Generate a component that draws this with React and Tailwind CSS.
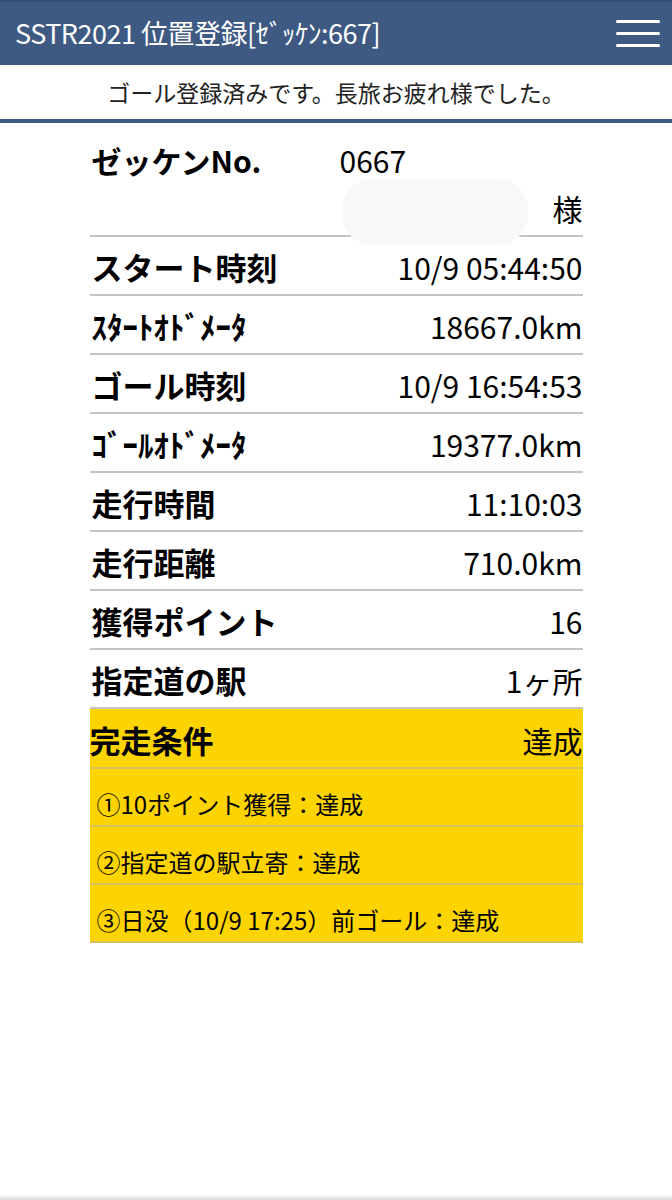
import React from 'react';

const font = { fontFamily: '"Noto Sans CJK JP", "Noto Sans", sans-serif' };

const rows = [
  { label: 'スタート時刻', value: '10/9 05:44:50' },
  { label: 'ｽﾀｰﾄｵﾄﾞﾒｰﾀ', value: '18667.0km' },
  { label: 'ゴール時刻', value: '10/9 16:54:53' },
  { label: 'ｺﾞｰﾙｵﾄﾞﾒｰﾀ', value: '19377.0km' },
  { label: '走行時間', value: '11:10:03' },
  { label: '走行距離', value: '710.0km' },
  { label: '獲得ポイント', value: '16' },
  { label: '指定道の駅', value: '1ヶ所' },
];

const conditions = [
  '①10ポイント獲得：達成',
  '②指定道の駅立寄：達成',
  '③日没（10/9 17:25）前ゴール：達成',
];

const App = () => {
  return (
    <div className="w-[672px] h-[1200px] bg-white text-black flex flex-col" style={font}>
      {/* header */}
      <div className="h-[65px] bg-[#3e5a83] border-t-2 border-[#34507a] flex items-center justify-between pl-[15px] pr-[12px]">
        <span className="text-white text-[27px] tracking-[-0.5px]">SSTR2021 位置登録[ｾﾞｯｹﾝ:667]</span>
        <div className="flex flex-col gap-[9px] w-[44px]">
          <span className="h-[3px] bg-white rounded-sm"></span>
          <span className="h-[3px] bg-white rounded-sm"></span>
          <span className="h-[3px] bg-white rounded-sm"></span>
        </div>
      </div>

      {/* message */}
      <div className="h-[58px] flex items-center justify-center text-[23px] text-[#222] border-b-4 border-[#3e5a83]">
        ゴール登録済みです。長旅お疲れ様でした。
      </div>

      {/* table */}
      <div className="w-[493px] mx-auto">
        <div className="relative h-[114px] border-b-2 border-[#c4c4c4] flex flex-col pl-[2px]">
          <div className="flex items-center h-[70px] pt-[4px]">
            <span className="font-bold text-[30px] w-[248px]">ゼッケンNo.</span>
            <span className="text-[30px]">0667</span>
          </div>
          <div className="flex justify-end text-[30px] leading-none">様</div>
          <div className="absolute left-[252px] top-[56px] w-[186px] h-[66px] bg-[#f8f8f8] rounded-[30px]"></div>
        </div>

        {rows.map((r) => (
          <div key={r.label} className="h-[59px] border-b-2 border-[#c4c4c4] flex items-center justify-between pl-[2px] pt-[4px]">
            <span className="font-bold text-[31px]">{r.label}</span>
            <span className="text-[30px]">{r.value}</span>
          </div>
        ))}

        <div className="bg-[#fdd400]">
          <div className="h-[60px] border-b-2 border-[#d6c15a] flex items-center justify-between pt-[4px]">
            <span className="font-bold text-[31px]">完走条件</span>
            <span className="text-[30px]">達成</span>
          </div>
          {conditions.map((c) => (
            <div key={c} className="h-[58px] border-b-2 border-[#d6c15a] flex items-center pl-[7px] pt-[14px] text-[24px]">
              {c}
            </div>
          ))}
        </div>
      </div>

      <div className="flex-1"></div>
      <div className="h-[6px] bg-gradient-to-b from-white to-[#d9d9d9]"></div>
    </div>
  );
};

export default App;
